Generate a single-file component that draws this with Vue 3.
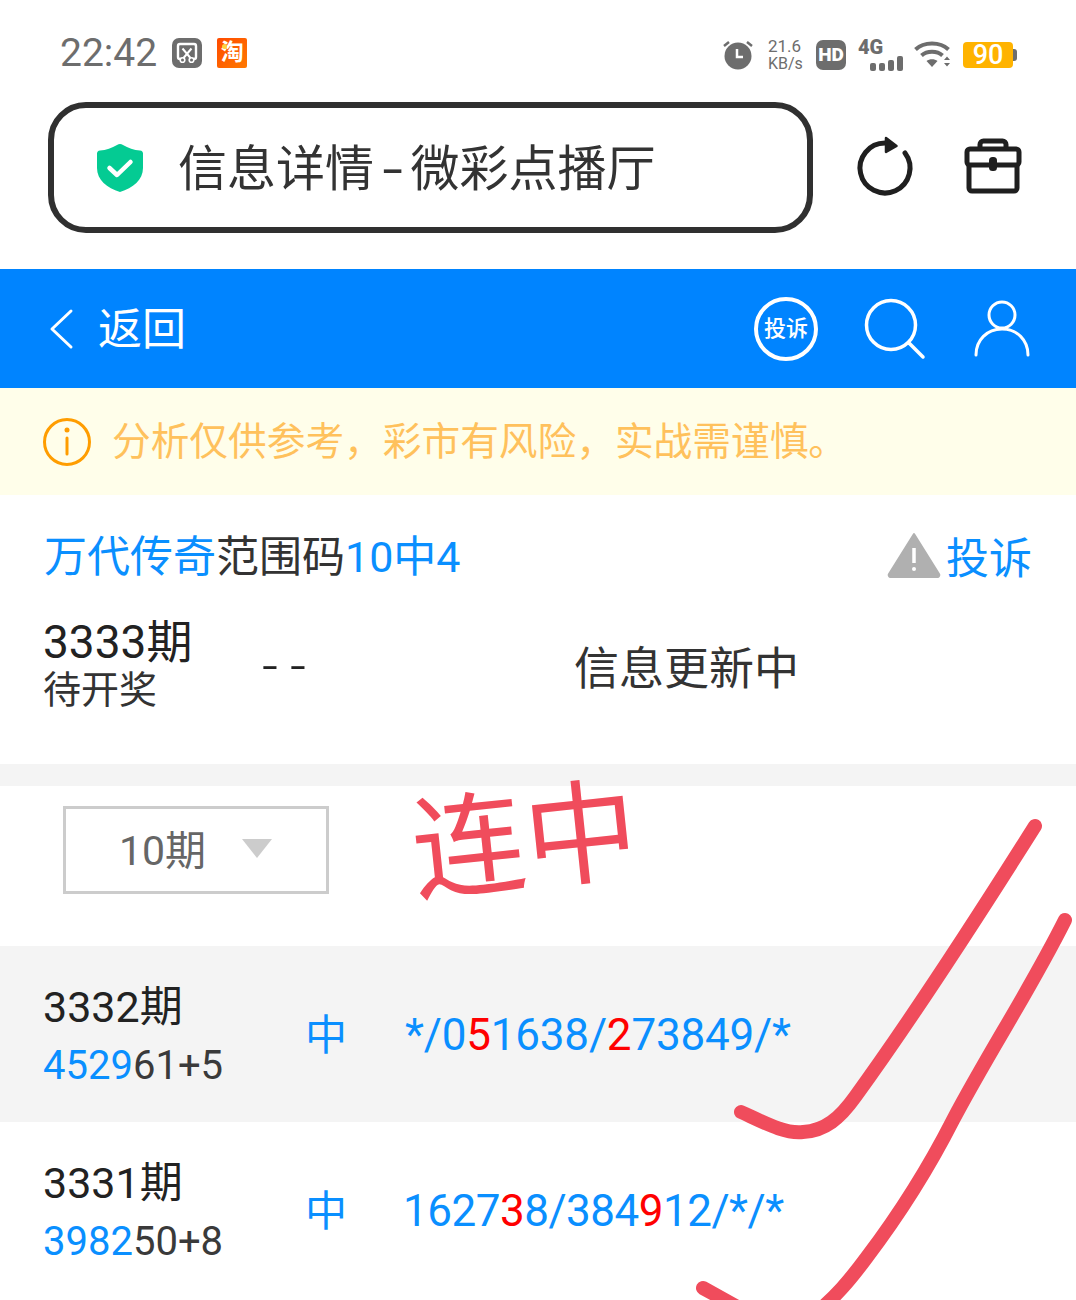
<script setup>
const rows = [
  {
    issue: '3332期',
    code: [['4529', 'b'], ['61+5', 'g']],
    result: '中',
    nums: [['*/0', 'b'], ['5', 'r'], ['1638/', 'b'], ['2', 'r'], ['73849/*', 'b']],
    shade: true,
  },
  {
    issue: '3331期',
    code: [['3982', 'b'], ['50+8', 'g']],
    result: '中',
    nums: [['1627', 'b'], ['3', 'r'], ['8/384', 'b'], ['9', 'r'], ['12/*/*', 'b']],
    shade: false,
  },
]
</script>

<template>
  <div class="page">
    <div class="status">
      <div class="status-left">
        <span class="time">22:42</span>
        <svg class="app-ico" width="30" height="30" viewBox="0 0 30 30">
          <rect width="30" height="30" rx="7" fill="#6d6d6d" />
          <path d="M10 21H8a2 2 0 0 1-2-2V8a2 2 0 0 1 2-2h14a2 2 0 0 1 2 2v11a2 2 0 0 1-2 2h-2" fill="none" stroke="#fff" stroke-width="2.400" />
          <path d="M10.500 10.500l8 9.500M19.500 10.500l-8 9.500" stroke="#fff" stroke-width="2" fill="none" />
          <circle cx="10.500" cy="22" r="2.300" fill="#6d6d6d" stroke="#fff" stroke-width="1.600" />
          <circle cx="19.500" cy="22" r="2.300" fill="#6d6d6d" stroke="#fff" stroke-width="1.600" />
        </svg>
        <span class="tao">淘</span>
      </div>
      <div class="status-right">
        <svg width="32" height="32" viewBox="0 0 32 32">
          <circle cx="16" cy="17" r="13.500" fill="#6d6d6d" />
          <path d="M2 7l5-4M30 7l-5-4" stroke="#6d6d6d" stroke-width="2.500" />
          <path d="M15 10v8h6" fill="none" stroke="#fff" stroke-width="2.500" />
        </svg>
        <div class="speed"><span class="rate">21.6</span><span>KB/s</span></div>
        <span class="hd">HD</span>
        <div class="net">
          <span class="net-label">4G</span>
          <div class="bars"><i class="h8" /><i class="h8" /><i class="h11" /><i class="h15" /></div>
        </div>
        <svg width="38" height="30" viewBox="0 0 38 30">
          <path d="M1.500 9.500C10 1.500 26 1.500 34.500 9.500" fill="none" stroke="#6d6d6d" stroke-width="4" />
          <path d="M7.500 15.500C13 10.500 23 10.500 28.500 15.500" fill="none" stroke="#6d6d6d" stroke-width="4" />
          <path d="M12.500 21c3-2.500 8-2.500 11 0L18 27z" fill="#6d6d6d" />
          <path d="M30 20l3-3.500 3 3.500zM30 23h6l-3 3.500z" fill="#6d6d6d" />
        </svg>
        <div class="battery"><span class="level">90</span><span class="cap" /></div>
      </div>
    </div>

    <div class="browser">
      <div class="address">
        <svg width="48" height="50" viewBox="0 0 48 50">
          <path d="M24 1c1 0 2 .4 3 1 5 3 11 5 17 5.600 2 .2 3 1.400 3 3V25c0 12-10 20-23 24C11 45 1 37 1 25V10.600c0-1.600 1-2.800 3-3C10 7 16 5 21 2c1-.6 2-1 3-1z" fill="#04cb93" />
          <path d="M13.500 25l7.500 7 13.500-13" fill="none" stroke="#fff" stroke-width="4.500" stroke-linecap="round" stroke-linejoin="round" />
        </svg>
        <span class="page-title">信息详情<span class="hy">-</span>微彩点播厅</span>
      </div>
      <svg class="refresh" width="60" height="64" viewBox="0 0 60 64">
        <path d="M50 17A25 25 0 1 1 30 7" fill="none" stroke="#1f1f1f" stroke-width="5" stroke-linecap="round" />
        <path d="M31 2l10.500 8L31 16z" fill="#1f1f1f" stroke="#1f1f1f" stroke-width="2.500" stroke-linejoin="round" />
      </svg>
      <svg class="toolbox" width="58" height="56" viewBox="0 0 58 56">
        <path d="M16 11V6.500A3.500 3.500 0 0 1 19.500 3h19A3.500 3.500 0 0 1 42 6.500V11" fill="none" stroke="#1f1f1f" stroke-width="5" />
        <rect x="3" y="11" width="52" height="16" rx="3" fill="none" stroke="#1f1f1f" stroke-width="5" />
        <path d="M5 27v23a3 3 0 0 0 3 3h42a3 3 0 0 0 3-3V27" fill="none" stroke="#1f1f1f" stroke-width="5" />
        <rect x="25" y="19" width="8" height="14" rx="3.500" fill="#1f1f1f" />
      </svg>
    </div>

    <header class="nav">
      <div class="back">
        <svg width="26" height="42" viewBox="0 0 26 42">
          <path d="M23 3L4 21l19 18" fill="none" stroke="#fff" stroke-width="3" stroke-linecap="round" stroke-linejoin="round" />
        </svg>
        <span>返回</span>
      </div>
      <div class="nav-icons">
        <span class="report-round">投诉</span>
        <svg class="search" width="62" height="62" viewBox="0 0 62 62">
          <circle cx="27" cy="27" r="24.500" fill="none" stroke="#fff" stroke-width="3.500" />
          <path d="M45 45l14 14" stroke="#fff" stroke-width="3.500" stroke-linecap="round" />
        </svg>
        <svg width="58" height="58" viewBox="0 0 58 58">
          <circle cx="29" cy="15" r="13" fill="none" stroke="#fff" stroke-width="3" />
          <path d="M3 55C3 40 14 29 29 29s26 11 26 26" fill="none" stroke="#fff" stroke-width="3" stroke-linecap="round" />
        </svg>
      </div>
    </header>

    <div class="notice">
      <svg width="50" height="50" viewBox="0 0 50 50">
        <circle cx="25" cy="25" r="22.500" fill="none" stroke="#ff9d00" stroke-width="3" />
        <circle cx="25" cy="13" r="2.500" fill="#ff9d00" />
        <path d="M25 21v16" stroke="#ff9d00" stroke-width="3" stroke-linecap="round" />
      </svg>
      <span class="notice-text">分析仅供参考，彩市有风险，实战需谨慎。</span>
    </div>

    <section class="summary">
      <div class="summary-head">
        <h2><em>万代传奇</em>范围码<em>10中4</em></h2>
        <div class="report">
          <svg width="54" height="46" viewBox="0 0 54 46">
            <path d="M27 2L52 42a2 2 0 0 1-2 3H4a2 2 0 0 1-2-3z" fill="#b0b0b0" stroke="#b0b0b0" stroke-width="2" stroke-linejoin="round" />
            <path d="M27 16v15" stroke="#fff" stroke-width="3.500" />
            <circle cx="27" cy="37" r="2" fill="#fff" />
          </svg>
          <span>投诉</span>
        </div>
      </div>
      <div class="current">
        <div class="current-issue">
          <strong>3333期</strong>
          <span>待开奖</span>
        </div>
        <span class="dash">--</span>
        <span class="updating">信息更新中</span>
      </div>
    </section>

    <section class="filter">
      <div class="select">
        <span>10期</span>
        <i class="arrow" />
      </div>
    </section>

    <div v-for="row in rows" :key="row.issue" class="row" :class="{ shade: row.shade }">
      <div class="row-issue">
        <div class="issue">{{ row.issue }}</div>
        <div class="code"><span v-for="(p, i) in row.code" :key="i" :class="p[1]">{{ p[0] }}</span></div>
      </div>
      <div class="hit">{{ row.result }}</div>
      <div class="nums"><span v-for="(p, i) in row.nums" :key="i" :class="p[1]">{{ p[0] }}</span></div>
    </div>

    <div class="scribble-text">连中</div>
    <svg class="scribble" width="1076" height="1300" viewBox="0 0 1076 1300">
      <path d="M741 1112C765 1123 785 1134 803 1132C825 1131 840 1118 855 1097C900 1035 960 945 1035 826" />
      <path d="M1065 920C1030 990 990 1050 953 1120C925 1175 895 1220 867 1257C850 1280 835 1298 810 1318" />
      <path d="M703 1288L750 1314" />
    </svg>
  </div>
</template>

<style>
html, body { margin: 0; background: #fff; }
</style>

<style scoped>
.page {
  position: relative;
  width: 1076px;
  height: 1300px;
  overflow: hidden;
  background: #fff;
  font-family: Roboto, "Noto Sans CJK SC", sans-serif;
  color: #222;
}

.status {
  height: 102px;
  box-sizing: border-box;
  padding: 30px 59px 0 60px;
  display: flex;
  justify-content: space-between;
  align-items: flex-start;
}
.status-left { display: flex; align-items: center; gap: 15px; height: 46px; }
.time { font-size: 39px; color: #6d6d6d; }
.tao {
  position: relative;
  width: 30px; height: 30px; border-radius: 2px;
  background: linear-gradient(135deg, #ff4a00, #ff7a00);
  color: #fff;
  font-size: 23px; line-height: 29px; text-align: center; font-weight: 700;
}
.tao::before {
  content: ""; position: absolute; left: 5px; top: 6px;
  width: 5px; height: 5px; border-radius: 50%; background: #ffd23f;
}
.status-right { display: flex; align-items: center; height: 46px; color: #6d6d6d; margin-top: 2px; }
.speed { display: flex; flex-direction: column; font-size: 16px; line-height: 17px; width: 36px; margin: 0 12px 0 14px; }
.rate { font-size: 17px; }
.hd {
  width: 30px; height: 30px; border-radius: 7px; background: #6d6d6d; color: #fff;
  font-size: 19px; font-weight: 900; line-height: 30px; text-align: center;
}
.net { position: relative; width: 45px; height: 32px; margin: 0 11px 0 12px; }
.net-label { position: absolute; left: 0; top: -4px; font-size: 20px; font-weight: 900; }
.bars { position: absolute; right: 0; bottom: 0; display: flex; align-items: flex-end; gap: 3px; }
.bars i { width: 6px; background: #6d6d6d; border-radius: 2px; }
.bars .h8 { height: 8px; }
.bars .h11 { height: 11px; }
.bars .h15 { height: 15px; }
.battery { display: flex; align-items: center; margin-left: 11px; }
.level {
  width: 50px; height: 26px; background: #ffb300; border-radius: 4px; color: #fff;
  font-size: 27px; font-weight: 500; line-height: 27px; text-align: center;
}
.cap { width: 4px; height: 12px; background: #6d6d6d; border-radius: 0 3px 3px 0; }

.browser { display: flex; align-items: center; padding-left: 48px; height: 131px; }
.address {
  width: 765px; height: 131px; box-sizing: border-box;
  border: 6px solid #303030; border-radius: 38px;
  display: flex; align-items: center; padding-left: 42px;
}
.page-title { font-size: 49px; line-height: 60px; color: #333; margin: 4px 0 0 34px; white-space: nowrap; }
.hy { display: inline-block; margin: 0 11.500px; transform: scaleX(1.500); }
.refresh { margin-left: 42px; }
.toolbox { margin: 0 0 3px 49px; }

.nav {
  margin-top: 36px; height: 119px; background: #0084ff; color: #fff;
  display: flex; align-items: center; justify-content: space-between;
  padding: 0 45px 0 48px;
}
.back { display: flex; align-items: center; gap: 24px; font-size: 44px; }
.back span { margin-bottom: 6px; }
.nav-icons { display: flex; align-items: center; gap: 46px; }
.search { margin-right: 1px; }
.report-round {
  width: 64px; height: 64px; box-sizing: border-box; border: 4px solid #fff; border-radius: 50%;
  font-size: 22px; font-weight: 500; line-height: 56px; text-align: center; white-space: nowrap;
}

.notice {
  height: 107px; background: #fffeea; color: #ffc15c;
  display: flex; align-items: center; gap: 20px; padding-left: 42px; font-size: 38.700px;
}
.notice-text { margin-bottom: 8px; white-space: nowrap; }

.summary { height: 269px; box-sizing: border-box; padding: 28px 44px 0; }
.summary-head { display: flex; justify-content: space-between; align-items: center; height: 60px; }
h2 { margin: 0; font-size: 43px; font-weight: 400; color: #333; }
h2 em { font-style: normal; color: #0a8fff; }
.report { display: flex; align-items: center; gap: 5px; font-size: 43px; color: #0a8fff; margin-top: 4px; }
.report svg { margin-left: -1px; }
.current { display: flex; align-items: center; margin-top: 33px; }
.current-issue { display: flex; flex-direction: column; width: 217px; margin-left: -1px; margin-right: 2px; }
.current-issue strong { font-size: 46px; font-weight: 400; line-height: 52px; color: #222; }
.current-issue span { font-size: 38px; line-height: 44px; color: #333; }
.dash { font-size: 56px; font-weight: 300; line-height: 60px; width: 312px; letter-spacing: 12px; color: #222; margin-top: 4px; }
.updating { font-size: 45px; color: #333; margin-top: 2px; }

.filter { box-sizing: border-box; border-top: 22px solid #f4f4f4; height: 182px; padding: 20px 0 0 63px; }
.select {
  width: 266px; height: 88px; box-sizing: border-box; border: 3px solid #ccc;
  display: flex; align-items: center; padding-left: 53px; font-size: 41px; color: #666;
}
.select span { margin-bottom: 6px; }
.arrow {
  margin-left: 36px; margin-top: -4px; width: 0; height: 0;
  border-left: 15px solid transparent; border-right: 15px solid transparent; border-top: 19px solid #ccc;
}

.row { height: 176px; display: flex; align-items: center; box-sizing: border-box; padding-left: 43px; }
.row:last-of-type { height: 178px; border-bottom: 2px solid #f4f4f4; }
.shade { background: #f4f4f4; }
.row-issue { width: 262px; }
.issue { font-size: 43px; line-height: 56px; color: #222; margin-top: 6px; }
.code { font-size: 40px; line-height: 58px; margin-top: 2px; }
.hit { width: 98px; font-size: 42px; color: #0a8fff; margin-bottom: 6px; }
.nums { font-size: 44px; letter-spacing: -0.500px; margin-top: 2px; }
.shade .nums { letter-spacing: -0.200px; margin-left: 2px; }
.b { color: #0a8fff; }
.g { color: #3a3a3a; }
.r { color: #f00; }

.scribble-text {
  position: absolute; left: 412px; top: 778px;
  font-size: 113px; line-height: 130px; color: #f04c5c;
  transform: rotate(-6deg); white-space: nowrap;
}
.scribble { position: absolute; left: 0; top: 0; pointer-events: none; }
.scribble path { fill: none; stroke: #f04c5c; stroke-width: 14; stroke-linecap: round; }
</style>
